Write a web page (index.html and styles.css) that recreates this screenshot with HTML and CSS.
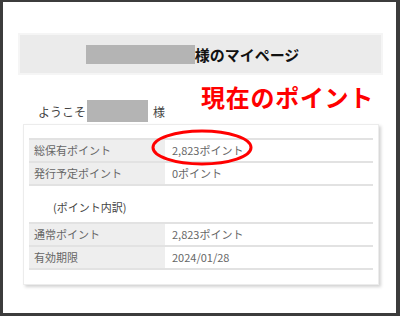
FILE: index.html
```html
<!DOCTYPE html>
<html lang="ja">

<head>
    <meta charset="UTF-8">
    <meta name="viewport" content="width=device-width, initial-scale=1.0">
    <title>マイページ</title>
    <link rel="stylesheet" href="styles.css">
</head>

<body>
    <div class="frame">
        <!-- ページタイトル -->
        <div class="page_title">
            <span class="mask mask_name"></span>様のマイページ
        </div>
        <div class="intro">
            <p class="welcome">ようこそ<span class="mask mask_small"></span>様</p>
            <h2 class="callout">現在のポイント</h2>
        </div>
        <div class="card">
            <div class="table">
                <div class="row"><div class="label">総保有ポイント</div><div class="value">2,823ポイント</div></div>
                <div class="row"><div class="label">発行予定ポイント</div><div class="value">0ポイント</div></div>
            </div>
            <p class="sub">(ポイント内訳)</p>
            <div class="table">
                <div class="row"><div class="label">通常ポイント</div><div class="value">2,823ポイント</div></div>
                <div class="row"><div class="label">有効期限</div><div class="value">2024/01/28</div></div>
            </div>
        </div>
        <!-- 赤い丸（注釈） -->
        <svg class="circle" width="102" height="37" viewBox="0 0 102 37">
            <ellipse cx="51" cy="18.5" rx="49" ry="16.5" fill="none" stroke="#f00" stroke-width="3" />
        </svg>
    </div>
</body>

</html>
```

FILE: styles.css
```css
* {
    margin: 0;
    padding: 0;
    box-sizing: border-box;
}

body {
    font-family: "Noto Sans CJK JP", "Noto Sans", sans-serif;
    background: #fff;
}

.frame {
    position: relative;
    width: 400px;
    height: 316px;
    border-style: solid;
    border-color: #3c3c3c;
    border-width: 2px 4px 3px 3px;
    background: #fff;
    overflow: hidden;
}

.mask {
    display: inline-block;
    background: #b4b4b4;
}

.page_title {
    display: flex;
    align-items: center;
    justify-content: center;
    width: 365px;
    height: 42px;
    margin: 31px 0 0 15px;
    padding-right: 16px;
    background: #ebebeb;
    border: 2px solid #f5f5f5;
    font-size: 15px;
    font-weight: 700;
    color: #111;
}

.mask_name {
    width: 109px;
    height: 19px;
}

.intro {
    display: flex;
    align-items: flex-start;
    margin-top: 10px;
    padding-left: 35px;
}

.welcome {
    display: flex;
    align-items: center;
    height: 22px;
    margin-top: 15px;
    font-size: 12px;
    color: #444;
}

.mask_small {
    width: 61px;
    height: 22px;
    margin: 0 5px 0 1px;
}

.callout {
    margin-left: auto;
    margin-right: 22px;
    font-size: 24px;
    line-height: 24px;
    font-weight: 700;
    letter-spacing: 0.7px;
    color: #f00;
}

.card {
    width: 356px;
    margin: 2px 0 0 20px;
    padding: 13px 5px 14px 5px;
    border: 1px solid #ececec;
    box-shadow: 2px 2px 3px rgba(0, 0, 0, .18);
}

.table {
    border-top: 2px solid #e2e2e2;
}

.row {
    display: flex;
    height: 23px;
    border-bottom: 2px solid #e2e2e2;
    font-size: 11px;
    line-height: 21px;
    color: #666;
}

.label {
    width: 136px;
    padding-left: 5px;
    background: #eeeeee;
}

.value {
    flex: 1;
    margin-left: 2px;
    padding-left: 5px;
}

.sub {
    margin: 12px 0 6px 24px;
    font-size: 11px;
    line-height: 18px;
    color: #444;
}

.circle {
    position: absolute;
    left: 148px;
    top: 127px;
}
```
